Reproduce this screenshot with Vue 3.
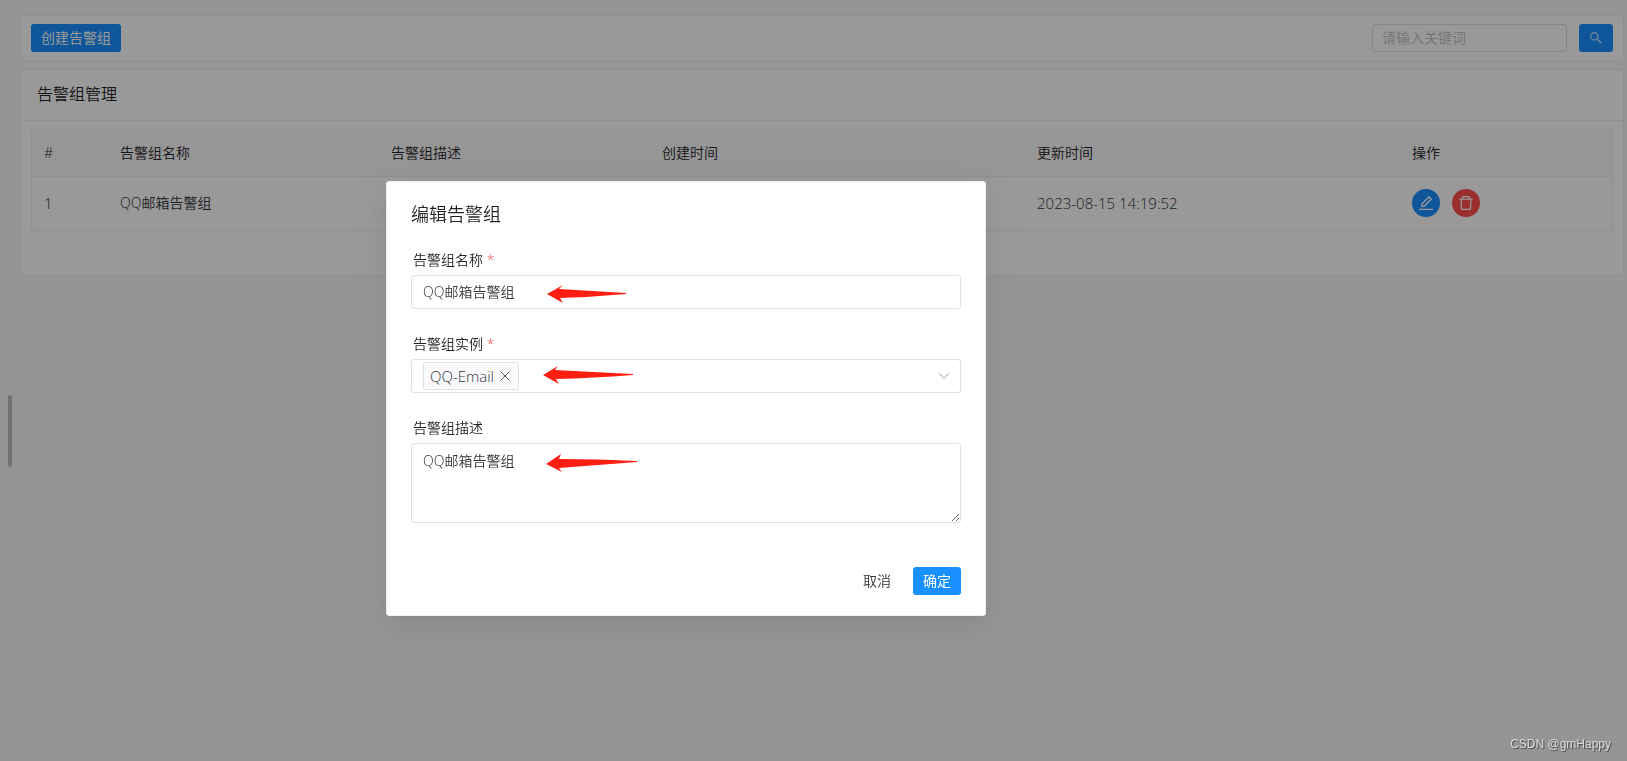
<script setup>
import { ref } from 'vue'

const keyword = ref('')
const name = ref('QQ邮箱告警组')
const description = ref('QQ邮箱告警组')
const instances = ref(['QQ-Email'])
const picked = ref('')
const rows = [
  { id: 1, name: 'QQ邮箱告警组', description: '', created: '', updated: '2023-08-15 14:19:52' },
]

function removeInstance(item) {
  instances.value = instances.value.filter((i) => i !== item)
}
</script>

<template>
  <div class="page">
    <div class="side-handle"></div>
    <main class="content">
      <section class="card toolbar">
        <button type="button" class="btn primary">创建告警组</button>
        <form class="search" @submit.prevent>
          <input v-model="keyword" class="search-input" type="text" placeholder="请输入关键词" aria-label="请输入关键词" />
          <button type="submit" class="btn primary search-btn" aria-label="搜索">
            <svg viewBox="0 0 24 24" width="16" height="16" fill="currentColor">
              <path d="M15.5 14.4h-.6l-.5-.5A6.1 6.1 0 0 0 15.8 9.6 6.2 6.2 0 1 0 9.6 15.8c1.6 0 3.1-.6 4.2-1.6l.5.5v.7l5 5 1.2-1.2zm-5.900 0a4.800 4.800 0 1 1 0-9.600 4.800 4.800 0 0 1 0 9.600z" />
            </svg>
          </button>
        </form>
      </section>

      <section class="card list">
        <h1 class="card-title">告警组管理</h1>
        <div class="table-wrap">
          <table>
            <colgroup>
              <col class="c-index" />
              <col class="c-text" />
              <col class="c-text" />
              <col class="c-time" />
              <col class="c-time" />
              <col />
            </colgroup>
            <thead>
              <tr>
                <th>#</th>
                <th>告警组名称</th>
                <th>告警组描述</th>
                <th>创建时间</th>
                <th>更新时间</th>
                <th>操作</th>
              </tr>
            </thead>
            <tbody>
              <tr v-for="row in rows" :key="row.id">
                <td class="latin">{{ row.id }}</td>
                <td>{{ row.name }}</td>
                <td>{{ row.description }}</td>
                <td class="latin">{{ row.created }}</td>
                <td class="latin">{{ row.updated }}</td>
                <td>
                  <div class="actions">
                    <button type="button" class="round edit" aria-label="编辑">
                      <svg viewBox="0 0 1024 1024" width="18" height="18" fill="currentColor">
                        <path d="M257.7 752c2 0 4-.2 6-.5L431.9 722c2-.4 3.9-1.3 5.3-2.8l423.9-423.9a9.96 9.96 0 0 0 0-14.1L694.9 114.9c-1.9-1.9-4.4-2.9-7.1-2.9s-5.2 1-7.1 2.9L256.8 538.8c-1.5 1.5-2.4 3.3-2.8 5.3l-29.5 168.2a33.5 33.5 0 0 0 9.4 29.8c6.6 6.4 14.9 9.9 23.8 9.9zm67.4-174.4L687.8 215l73.3 73.3-362.7 362.6-88.9 15.7 15.6-89zM880 836H144c-17.7 0-32 14.3-32 32v36c0 4.4 3.6 8 8 8h784c4.4 0 8-3.6 8-8v-36c0-17.7-14.3-32-32-32z" />
                      </svg>
                    </button>
                    <button type="button" class="round delete" aria-label="删除">
                      <svg viewBox="0 0 1024 1024" width="18" height="18" fill="currentColor">
                        <path d="M360 184h-8c4.4 0 8-3.6 8-8v8h304v-8c0 4.4 3.6 8 8 8h-8v72h72v-80c0-35.3-28.7-64-64-64H352c-35.3 0-64 28.7-64 64v80h72v-72zm504 72H160c-17.7 0-32 14.3-32 32v32c0 4.4 3.6 8 8 8h60.4l24.7 523c1.6 34.1 29.8 61 63.9 61h454c34.2 0 62.3-26.8 63.9-61l24.7-523H888c4.4 0 8-3.6 8-8v-32c0-17.7-14.3-32-32-32zM731.3 840H292.7l-24.2-512h487l-24.2 512z" />
                      </svg>
                    </button>
                  </div>
                </td>
              </tr>
            </tbody>
          </table>
        </div>
      </section>
    </main>

    <div class="mask">
      <form class="modal" role="dialog" aria-labelledby="modal-title" @submit.prevent>
        <h2 id="modal-title" class="modal-title">编辑告警组</h2>

        <div class="field">
          <label for="group-name">告警组名称 <span class="required">*</span></label>
          <div class="control">
            <input id="group-name" v-model="name" class="box" type="text" />
            <svg class="arrow arrow-name" viewBox="0 0 79 18" width="79" height="18">
              <path d="M0 9 16 0 12 4Q46 6 79 8V9Q46 12 13 13L16 18Z" fill="#ff1f12" />
            </svg>
          </div>
        </div>

        <div class="field">
          <label for="group-instance">告警组实例 <span class="required">*</span></label>
          <div class="control box multi">
            <select id="group-instance" v-model="picked" class="native-select">
              <option value=""></option>
            </select>
            <span v-for="item in instances" :key="item" class="tag latin">
              {{ item }}
              <button type="button" class="tag-close" aria-label="移除" @click="removeInstance(item)">
                <svg viewBox="0 0 10 10" width="10" height="10" fill="none" stroke="currentColor">
                  <path d="M.5.5l9 9M9.5.5l-9 9" />
                </svg>
              </button>
            </span>
            <svg class="chevron" viewBox="0 0 12 8" width="12" height="8" fill="none" stroke="#c2c2c2" stroke-width="1.2">
              <path d="M1 1.2l5 5 5-5" />
            </svg>
            <svg class="arrow arrow-instance" viewBox="0 0 90 18" width="90" height="18">
              <path d="M0 9 15 0 12 4Q50 6 90 8V9Q50 12 13 13L16 18Z" fill="#ff1f12" />
            </svg>
          </div>
        </div>

        <div class="field">
          <label for="group-desc">告警组描述</label>
          <div class="control">
            <textarea id="group-desc" v-model="description" class="box area"></textarea>
            <svg class="arrow arrow-desc" viewBox="0 0 91 18" width="91" height="18">
              <path d="M0 10 15 0 13 5Q52 5 91 7V8Q52 11 13 14L16 18Z" fill="#ff1f12" />
            </svg>
          </div>
        </div>

        <footer class="modal-footer">
          <button type="button" class="btn text">取消</button>
          <button type="submit" class="btn primary">确定</button>
        </footer>
      </form>
    </div>

    <div class="watermark">CSDN @gmHappy</div>
  </div>
</template>

<style>
body {
  background: #f8f8fc;
}
</style>

<style scoped>
.page,
.page * {
  box-sizing: border-box;
}
.page {
  min-height: 100vh;
  padding: 15px 3px 15px 20px;
  font-family: "Open Sans", "Noto Sans CJK SC", sans-serif;
  font-size: 14px;
  font-weight: 350;
  line-height: 22px;
  color: #333639;
}
button,
input,
textarea,
select {
  font: inherit;
  color: inherit;
  margin: 0;
}
svg {
  display: block;
}
.latin {
  font-size: 15px;
}
.side-handle {
  position: fixed;
  left: 8px;
  top: 395px;
  width: 4px;
  height: 72px;
  border-radius: 2px;
  background: #bfbfbf;
}
.content {
  display: flex;
  flex-direction: column;
  gap: 8px;
}
.card {
  background: #fff;
  border: 1px solid #efeff5;
  border-radius: 3px;
}
.toolbar {
  display: flex;
  justify-content: space-between;
  padding: 8px 10px;
}
.btn {
  height: 28px;
  padding: 0 10px;
  border: 0;
  border-radius: 3px;
  background: transparent;
  line-height: 28px;
  cursor: pointer;
}
.primary {
  background: #1890ff;
  font-weight: 400;
  color: #fff;
}
.search {
  display: flex;
  gap: 12px;
}
.search-input {
  width: 195px;
  height: 28px;
  padding: 0 9px 2px;
  border: 1px solid #e0e0e6;
  border-radius: 3px;
  background: #fff;
  outline: none;
}
.search-input::placeholder {
  color: #c2c2c2;
  opacity: 1;
}
.search-btn {
  width: 34px;
  padding: 0 9px;
}
.card-title {
  margin: 0;
  padding: 11px 16px 13px;
  border-bottom: 1px solid #efeff5;
  font-size: 16px;
  font-weight: 350;
  line-height: 26px;
  color: #1f2225;
}
.table-wrap {
  margin: 8px 10px 44px;
  border: 1px solid #efeff5;
  border-radius: 3px;
  overflow: hidden;
}
table {
  width: 100%;
  border-collapse: separate;
  border-spacing: 0;
  table-layout: fixed;
}
.c-index {
  width: 76px;
}
.c-text {
  width: 17.15%;
}
.c-time {
  width: 23.74%;
}
th,
td {
  padding: 12px;
  text-align: left;
}
td {
  padding-bottom: 13px;
}
th {
  background: #fafafc;
  border-bottom: 1px solid #efeff5;
  font-weight: 350;
  color: #1f2225;
}
.actions {
  display: flex;
  gap: 12px;
}
.round {
  display: flex;
  align-items: center;
  justify-content: center;
  width: 28px;
  height: 28px;
  padding: 0;
  border: 0;
  border-radius: 50%;
  color: #fff;
  cursor: pointer;
}
.edit {
  background: #1890ff;
}
.delete {
  background: #ff4d4f;
}
.mask {
  position: fixed;
  inset: 0;
  padding: 181px 0 0 386px;
  background: rgba(0, 0, 0, 0.4);
}
.modal {
  width: 600px;
  padding: 18px 24px 20px;
  border: 1px solid #efeff5;
  border-radius: 3px;
  background: #fff;
  box-shadow: 0 6px 16px -9px rgba(0, 0, 0, 0.08), 0 9px 28px 0 rgba(0, 0, 0, 0.05), 0 12px 48px 16px rgba(0, 0, 0, 0.03);
}
.modal-title {
  margin: 0 0 21px;
  font-size: 18px;
  font-weight: 350;
  line-height: 28px;
  color: #1f2225;
}
.field {
  margin-bottom: 24px;
}
.field label {
  display: block;
  height: 26px;
  padding-left: 2px;
  color: #1f2225;
}
.required {
  color: #ff4d4f;
}
.control {
  position: relative;
}
.box {
  display: block;
  width: 100%;
  height: 34px;
  padding: 0 11px 2px;
  border: 1px solid #e0e0e6;
  border-radius: 3px;
  background: #fff;
  outline: none;
}
.multi {
  display: flex;
  align-items: center;
  justify-content: space-between;
  padding: 0 10px 0 11px;
}
.native-select {
  position: absolute;
  inset: 0;
  width: 100%;
  border: 0;
  background: transparent;
  appearance: none;
  outline: none;
}
.tag {
  position: relative;
  display: flex;
  align-items: center;
  gap: 6px;
  height: 28px;
  padding: 0 8px 0 6px;
  border: 1px solid #e0e0e6;
  border-radius: 2px;
  background: #fafafc;
}
.tag-close {
  padding: 0;
  border: 0;
  background: transparent;
  color: #55585b;
  cursor: pointer;
}
.chevron {
  position: relative;
}
.area {
  height: 80px;
  padding: 6px 11px;
  line-height: 22px;
  resize: vertical;
}
.arrow {
  position: absolute;
  pointer-events: none;
}
.arrow-name {
  left: 136px;
  top: 10px;
}
.arrow-instance {
  left: 131px;
  top: 6px;
}
.arrow-desc {
  left: 135px;
  top: 11px;
}
.modal-footer {
  display: flex;
  justify-content: flex-end;
  gap: 12px;
  padding-top: 20px;
}
.watermark {
  position: fixed;
  right: 16px;
  bottom: 7px;
  font-family: "Liberation Sans", Arial, sans-serif;
  font-size: 12px;
  font-weight: 400;
  line-height: 20px;
  color: #dcdcdc;
  text-shadow: 1px 1px 1px #444;
}
</style>
